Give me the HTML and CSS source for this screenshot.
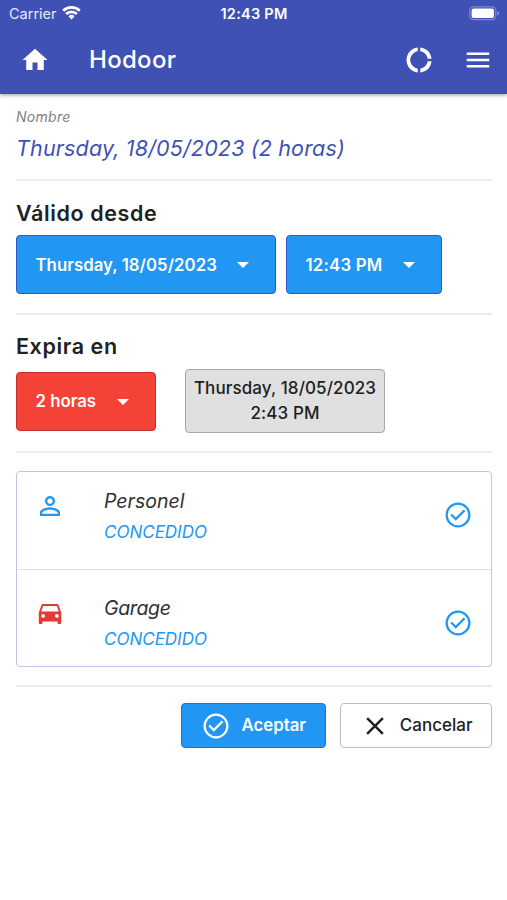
FILE: index.html
```html
<!DOCTYPE html>
<html lang="es">
<head>
<meta charset="utf-8">
<title>Hodoor</title>
<link rel="stylesheet" href="styles.css">
</head>
<body>
<header class="top">
  <div class="status">
    <div class="carrier"><span>Carrier</span>
      <svg width="19" height="15" viewBox="0 0 19 15" fill="none" stroke="#fff" stroke-width="2.7"><path d="M1.200 5.700a12 12 0 0 1 16.600 0M4.100 9a7.800 7.800 0 0 1 10.800 0"/><path d="M9.500 14.500 6.400 11.300a4.500 4.500 0 0 1 6.200 0z" fill="#fff" stroke="none"/></svg>
    </div>
    <span class="clock">12:43 PM</span>
    <svg class="battery" width="31" height="15" viewBox="0 0 31 15"><rect x=".8" y=".8" width="26" height="12.8" rx="3.8" fill="none" stroke="#7f89ce" stroke-width="1.2"/><rect x="2.6" y="2.5" width="22.4" height="9.4" rx="2" fill="#fff"/><path d="M28.400 5v4.600q1.600-.8 1.600-2.300T28.400 5z" fill="#929bd6"/></svg>
  </div>
  <nav class="bar">
    <svg class="icon" viewBox="0 0 24 24"><path d="M10 20v-6h4v6h5v-8h3L12 3 2 12h3v8z"/></svg>
    <h1>Hodoor</h1>
    <svg class="icon donut" viewBox="0 0 24 24"><path d="M11 5.080V2c-5 .5-9 4.810-9 10s4 9.500 9 10v-3.080c-3-.48-6-3.400-6-6.920s3-6.440 6-6.920zM18.970 11H22c-.47-5-4-8.530-9-9v3.080C16 5.510 18.540 8 18.970 11zM13 18.920V22c5-.47 8.530-4 9-9h-3.030c-.43 3-2.970 5.490-5.970 5.920z"/></svg>
    <svg class="icon" viewBox="0 0 24 24"><path d="M3 18h18v-2H3v2zm0-5h18v-2H3v2zm0-7v2h18V6H3z"/></svg>
  </nav>
</header>
<main>
  <section class="name">
    <div class="label">Nombre</div>
    <div class="value">Thursday, 18/05/2023 (2 horas)</div>
  </section>
  <section class="from">
    <h2>Válido desde</h2>
    <div class="row">
      <button class="pick date"><span>Thursday, 18/05/2023</span><i class="caret"></i></button>
      <button class="pick time"><span>12:43 PM</span><i class="caret"></i></button>
    </div>
  </section>
  <section class="until">
    <h2>Expira en</h2>
    <div class="row">
      <button class="pick span"><span>2 horas</span><i class="caret"></i></button>
      <div class="expiry"><span>Thursday, 18/05/2023</span><span class="hour">2:43 PM</span></div>
    </div>
  </section>
  <section class="access">
    <ul>
      <li>
        <svg class="icon kind" viewBox="0 0 24 24"><path d="M12 5.900a2.100 2.100 0 1 1 0 4.200 2.100 2.100 0 0 1 0-4.200m0 9c2.970 0 6.100 1.460 6.100 2.100v1.100H5.900V17c0-.64 3.130-2.100 6.100-2.100M12 4C9.790 4 8 5.790 8 8s1.790 4 4 4 4-1.790 4-4-1.790-4-4-4zm0 9c-2.670 0-8 1.340-8 4v3h16v-3c0-2.660-5.330-4-8-4z"/></svg>
        <div class="text"><div class="title person">Personel</div><div class="state">CONCEDIDO</div></div>
        <svg class="icon check" viewBox="0 0 24 24"><path d="M12 2a10 10 0 1 0 0 20 10 10 0 0 0 0-20zm0 18.200a8.200 8.200 0 1 1 0-16.400 8.200 8.200 0 0 1 0 16.400zM16.600 7.500 10.200 13.900l-3-3L5.900 12.200l4.300 4.300 7.700-7.700z"/></svg>
      </li>
      <li>
        <svg class="icon kind car" viewBox="0 0 24 24"><path d="M18.920 5.010C18.720 4.420 18.160 4 17.500 4h-11c-.66 0-1.210.42-1.420 1.010L3 11v8c0 .55.45 1 1 1h1c.55 0 1-.45 1-1v-1h12v1c0 .55.45 1 1 1h1c.55 0 1-.45 1-1v-8l-2.080-5.990zM6.500 15c-.83 0-1.500-.67-1.500-1.500S5.670 12 6.500 12s1.500.67 1.500 1.500S7.330 15 6.500 15zm11 0c-.83 0-1.500-.67-1.500-1.500s.67-1.500 1.500-1.500 1.500.67 1.500 1.500-.67 1.500-1.500 1.500zM5 10l1.500-4.500h11L19 10H5z"/></svg>
        <div class="text"><div class="title garage">Garage</div><div class="state">CONCEDIDO</div></div>
        <svg class="icon check" viewBox="0 0 24 24"><path d="M12 2a10 10 0 1 0 0 20 10 10 0 0 0 0-20zm0 18.200a8.200 8.200 0 1 1 0-16.400 8.200 8.200 0 0 1 0 16.400zM16.600 7.500 10.200 13.900l-3-3L5.900 12.200l4.300 4.300 7.700-7.700z"/></svg>
      </li>
    </ul>
  </section>
  <footer>
    <button class="action ok"><svg class="icon" viewBox="0 0 24 24"><path d="M12 2a10 10 0 1 0 0 20 10 10 0 0 0 0-20zm0 18.200a8.200 8.200 0 1 1 0-16.400 8.200 8.200 0 0 1 0 16.400zM16.600 7.500 10.200 13.900l-3-3L5.900 12.200l4.300 4.300 7.700-7.700z"/></svg><span>Aceptar</span></button>
    <button class="action cancel"><svg class="icon" viewBox="0 0 24 24"><path d="M19 6.410 17.590 5 12 10.590 6.410 5 5 6.410 10.590 12 5 17.590 6.410 19 12 13.410 17.590 19 19 17.590 13.410 12z"/></svg><span>Cancelar</span></button>
  </footer>
</main>
</body>
</html>
```
FILE: styles.css
```css
* { box-sizing: border-box; }
body { margin: 0; background: #fff; color: #212121; font-family: Inter, "Liberation Sans", sans-serif; }
h1, h2, ul { margin: 0; padding: 0; }
svg { display: block; flex: none; }
.top { height: 94px; background: #3f51b5; color: #fff; box-shadow: 0 1px 4px rgba(0,0,0,.4); }
.status { height: 28px; padding: 0 8px 0 9px; display: grid; grid-template-columns: 1fr auto 1fr; align-items: center; font-size: 14.5px; line-height: 28px; }
.carrier { display: flex; align-items: center; gap: 5px; letter-spacing: 0; color: #e8eaf8; }
.carrier svg { margin-top: -3px; }
.clock { font-weight: 600; letter-spacing: .25px; }
.battery { justify-self: end; margin-top: -1px; margin-right: -1px; }
.icon { width: 30px; height: 30px; fill: currentColor; }
.bar { height: 64px; padding: 0 14.5px 0 20px; display: flex; align-items: center; }
h1 { margin-left: 39px; font-size: 24px; font-weight: 500; line-height: 30px; letter-spacing: .3px; }
.bar .icon { margin-top: -1px; }
.donut { margin-left: auto; margin-right: 29px; }
main { padding: 0 15px 0 16px; }
section { border-bottom: 2px solid #ebebeb; }
.name { height: 87px; padding-top: 14px; font-style: italic; }
.label { font-size: 14px; line-height: 18px; color: #808080; letter-spacing: .3px; }
.value { margin-top: 8px; font-size: 21.5px; line-height: 28px; color: #3f51b5; letter-spacing: .16px; white-space: nowrap; }
.from { height: 134px; padding-top: 18px; }
.until { height: 138px; padding-top: 17px; }
h2 { font-size: 21.5px; font-weight: 600; line-height: 28px; letter-spacing: .6px; }
.row { display: flex; align-items: center; }
.from .row { gap: 10px; margin-top: 8px; }
.until .row { gap: 29px; margin-top: 9px; }
button { font: inherit; margin: 0; }
.pick { height: 59px; padding: 0 26px 0 18.5px; display: flex; align-items: center; justify-content: space-between; color: #fff; background: #2196f3; border: 1px solid #3558c4; border-radius: 4px; font-size: 16.8px; font-weight: 600; white-space: nowrap; }
.date { width: 260px; letter-spacing: .04px; }
.time { width: 156px; letter-spacing: .2px; }
.span { width: 140px; background: #f44336; border-color: #c22f2f; }
.caret { border: 6.5px solid transparent; border-top-color: #fff; border-bottom: 0; margin-top: 1px; }
.expiry { width: 200px; height: 64px; border: 1px solid #a8a8a8; border-radius: 4px; background: #e0e0e0; display: flex; flex-direction: column; align-items: center; justify-content: center; font-size: 17px; font-weight: 500; line-height: 25.5px; white-space: nowrap; letter-spacing: .1px; }
.access { height: 234px; padding-top: 18px; }
ul { list-style: none; height: 196px; border: 1.5px solid #c1c3e4; border-radius: 4px; }
li { height: 97px; padding: 0 18px 0 18px; display: flex; }
li + li { border-top: 1.5px solid #e0e0e0; height: 97px; padding-top: 9px; }
.kind { margin-top: 19px; color: #2196f3; }
.car { margin-top: 20px; color: #e53935; }
.text { margin-left: 39px; padding-top: 15px; font-style: italic; }
.title { font-size: 19.5px; line-height: 28px; letter-spacing: 0; color: #303030; }
.garage { letter-spacing: -.35px; }
.state { margin-top: 4px; font-size: 17px; line-height: 26px; color: #2196f3; }
.check { margin: 28px 0 0 auto; color: #2196f3; }
li + li .check { margin-top: 29px; }
footer { display: flex; justify-content: flex-end; gap: 14px; padding-top: 16px; }
.action { height: 45px; padding: 0 19px; display: flex; align-items: center; justify-content: space-between; border-radius: 4px; font-size: 17px; }
.ok { width: 145px; color: #fff; background: #2196f3; border: 1px solid #1976c5; font-weight: 600; }
.action span { margin-top: -1px; }
.ok span { font-size: 16.8px; }
.cancel { width: 152px; padding-right: 18.5px; color: #212121; background: #fff; border: 1.5px solid #bdbdbd; font-weight: 500; }
```
